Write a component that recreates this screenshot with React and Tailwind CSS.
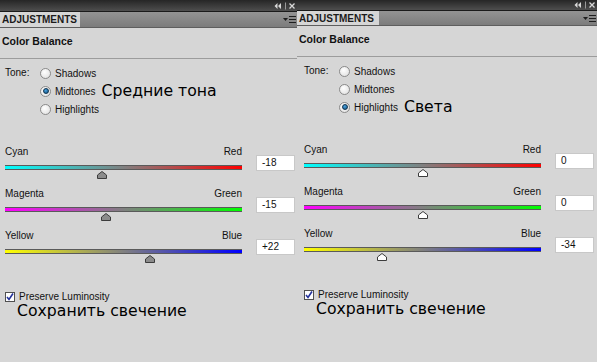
const sliders = [
  { from: "Cyan", to: "Red", bar: "bg-[linear-gradient(to_right,#00ffff,#808080_50%,#ff0000)]" },
  { from: "Magenta", to: "Green", bar: "bg-[linear-gradient(to_right,#ff00ff,#808080_50%,#00ff00)]" },
  { from: "Yellow", to: "Blue", bar: "bg-[linear-gradient(to_right,#ffff00,#808080_50%,#0000ff)]" },
];

const tones = ["Shadows", "Midtones", "Highlights"];

const panels = [
  {
    id: "left",
    width: "w-[297px]",
    topBar: "h-[12px]",
    tabRow: "h-[16px]",
    tab: "w-[80px]",
    pad: "pl-[5px]",
    tone: "Midtones",
    note: "Средние тона",
    values: [-18, -15, 22],
    thumbFill: "#8b8b8b",
  },
  {
    id: "right",
    width: "w-[300px]",
    topBar: "h-[11px]",
    tabRow: "h-[15px]",
    tab: "w-[82px]",
    pad: "pl-[7px]",
    tone: "Highlights",
    note: "Света",
    values: [0, 0, -34],
    thumbFill: "#ffffff",
  },
];

const ui = { fontFamily: '"Liberation Sans", Arial, sans-serif' };
const big = { fontFamily: '"DejaVu Sans", Verdana, sans-serif' };

function fmt(v) {
  if (v > 0) return "+" + v;
  return String(v);
}

function TopIcons() {
  return (
    <svg width="22" height="8" viewBox="0 0 22 8" className="shrink-0">
      <path d="M3.5 1 L0.5 4 L3.5 7 Z M7 1 L4 4 L7 7 Z" fill="#d8d8d8" />
      <path d="M11.5 0.5 V7.5" stroke="#9a9a9a" />
      <path d="M15.5 1.5 L20.5 6.5 M20.5 1.5 L15.5 6.5" stroke="#d8d8d8" strokeWidth="1.3" />
    </svg>
  );
}

function MenuIcon() {
  return (
    <svg width="13" height="9" viewBox="0 0 13 9" className="shrink-0">
      <path d="M0 3 H5 L2.5 6 Z" fill="#1e1e1e" />
      <path d="M6 1.5 H13 M6 4.5 H13 M6 7.5 H13" stroke="#1e1e1e" strokeWidth="1.2" />
    </svg>
  );
}

function Radio({ on }) {
  return (
    <span className="w-[11px] h-[11px] rounded-full border border-[#8a8a8a] bg-[radial-gradient(circle_at_40%_35%,#ffffff,#dcdcdc)] flex items-center justify-center shrink-0">
      {on && <span className="w-[6px] h-[6px] rounded-full bg-[radial-gradient(circle_at_40%_35%,#4aa3e0,#12507f)] border border-[#0d3350]" />}
    </span>
  );
}

function Thumb({ fill }) {
  return (
    <svg width="10" height="8" viewBox="0 0 10 8">
      <path d="M0.5 7.5 V4 L5 0.5 L9.5 4 V7.5 Z" fill={fill} stroke="#3c3c3c" />
    </svg>
  );
}

function Slider({ s, value, fill }) {
  return (
    <div className="flex h-[42px]">
      <div className="w-[237px]">
        <div className="flex justify-between h-[12px] leading-[12px] text-[10px] text-[#111]">
          <span>{s.from}</span>
          <span>{s.to}</span>
        </div>
        <div className={"mt-[7px] h-[5px] border-t border-b border-[#5a5a5a] " + s.bar} />
        <div className="relative h-[9px]">
          <div className="absolute top-[1px] -translate-x-1/2" style={{ left: (value + 100) / 2 + "%" }}>
            <Thumb fill={fill} />
          </div>
        </div>
      </div>
      <div className="ml-[14px] mt-[9px] w-[39px] h-[16px] bg-white border border-[#c8c8c8] text-[10px] leading-[14px] pl-[5px] text-[#111]">
        {fmt(value)}
      </div>
    </div>
  );
}

function Panel({ p }) {
  return (
    <div className={"shrink-0 h-full overflow-hidden bg-[#d6d6d6] " + p.width} style={ui}>
      <div className={"flex items-center justify-end pr-[1px] bg-[linear-gradient(#262626,#4e4e4e)] border-b border-[#1a1a1a] " + p.topBar}>
        <TopIcons />
      </div>
      <div className={"flex items-stretch bg-[linear-gradient(#939393,#7c7c7c)] border-b border-[#5e5e5e] " + p.tabRow}>
        <div className={"bg-[#d6d6d6] pl-[2px] text-[10px] font-bold leading-[15px] text-[#1b1b1b] whitespace-nowrap " + p.tab}>
          ADJUSTMENTS
        </div>
        <div className="flex-1 flex items-center justify-end pr-[1px]">
          <MenuIcon />
        </div>
      </div>
      <div className="h-[31px] border-b border-[#9c9c9c] pt-[7px] pl-[2px] text-[10.5px] font-bold leading-[12px] text-[#111]">
        Color Balance
      </div>
      <div className={"flex mt-[5px] " + p.pad}>
        <div className="w-[35px] h-[18px] leading-[18px] text-[10px] text-[#111]">Tone:</div>
        <div className="flex flex-col">
          {tones.map((t) => (
            <div key={t} className="flex items-center h-[18px] gap-[4px]">
              <Radio on={t === p.tone} />
              <span className="text-[10px] text-[#111]">{t}</span>
              {t === p.tone && (
                <span className="ml-[2px] text-[15.7px] leading-[18px] text-black" style={big}>
                  {p.note}
                </span>
              )}
            </div>
          ))}
        </div>
      </div>
      <div className={"mt-[28px] " + p.pad}>
        {sliders.map((s, i) => (
          <Slider key={s.from} s={s} value={p.values[i]} fill={p.thumbFill} />
        ))}
      </div>
      <div className={"mt-[20px] " + p.pad}>
        <div className="flex items-center h-[10px] gap-[4px]">
          <span className="w-[10px] h-[10px] bg-white border border-[#505050] flex items-center justify-center">
            <svg width="8" height="8" viewBox="0 0 8 8">
              <path d="M1 4 L3 6.5 L7 0.5" fill="none" stroke="#23329a" strokeWidth="1.6" />
            </svg>
          </span>
          <span className="text-[10px] leading-[10px] text-[#111]">Preserve Luminosity</span>
        </div>
        <div className="pl-[12px] text-[15.7px] leading-[18px] text-black" style={big}>
          Сохранить свечение
        </div>
      </div>
    </div>
  );
}

export default function App() {
  return (
    <div className="flex w-[597px] h-[362px] overflow-hidden bg-[#d6d6d6]">
      {panels.map((p) => (
        <Panel key={p.id} p={p} />
      ))}
    </div>
  );
}
